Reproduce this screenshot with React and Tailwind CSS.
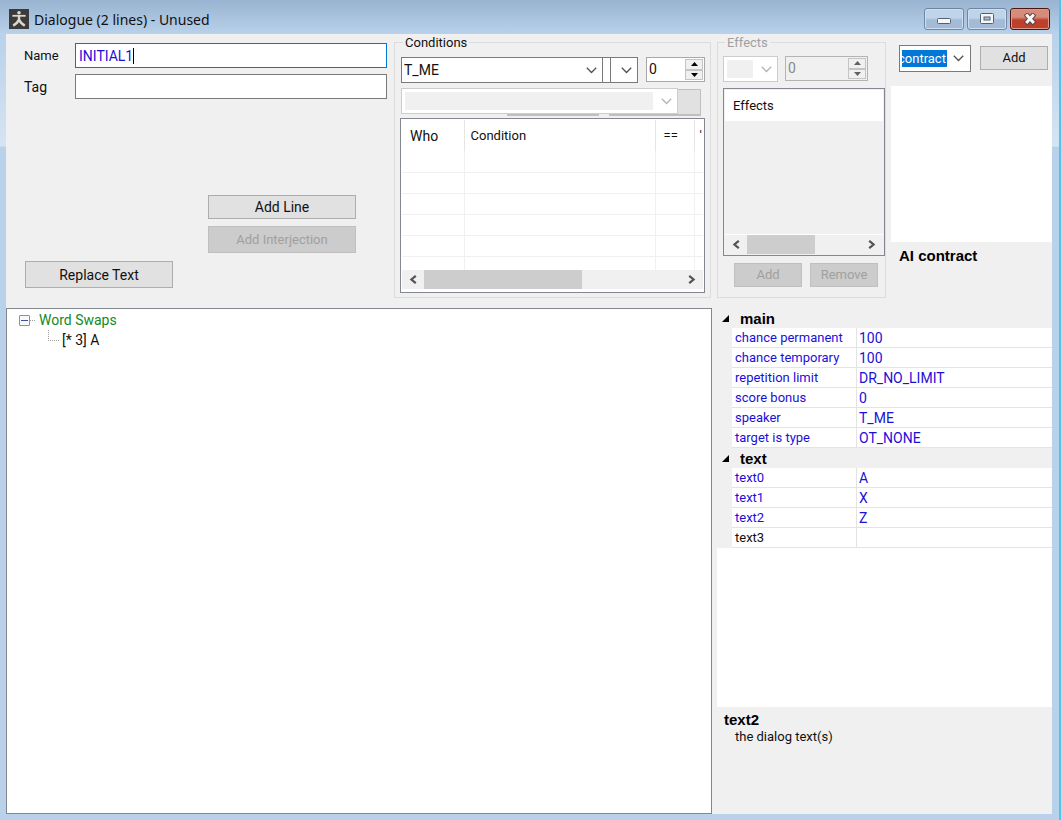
import clsx from 'clsx';

const mainProps = [
  ['chance permanent', '100'],
  ['chance temporary', '100'],
  ['repetition limit', 'DR_NO_LIMIT'],
  ['score bonus', '0'],
  ['speaker', 'T_ME'],
  ['target is type', 'OT_NONE'],
];

const textProps = [
  ['text0', 'A'],
  ['text1', 'X'],
  ['text2', 'Z'],
  ['text3', ''],
];

const Chevron = ({ className }) => (
  <svg viewBox="0 0 11 7" className={clsx('h-[7px] w-[11px]', className)} fill="none" stroke="currentColor" strokeWidth="1.3">
    <path d="M0.8 0.8 5.5 5.5 10.2 0.8" />
  </svg>
);

const Button = ({ className, children, ...props }) => (
  <button
    type="button"
    className={clsx(
      'border border-[#adadad] bg-[#e1e1e1] text-center leading-4 text-[#111] disabled:border-[#bfbfbf] disabled:bg-[#cccccc] disabled:text-[#a0a0a0]',
      className,
    )}
    {...props}
  >
    {children}
  </button>
);

// Select box with a flat arrow; a disabled one shows a gray well inside
const Combo = ({ label, options = [''], disabled, className }) => (
  <div className={clsx('relative h-[26px] border bg-white', disabled ? 'border-[#cccccc] p-[3px] pr-6' : 'border-[#7a7a7a]', className)}>
    <select
      aria-label={label}
      disabled={disabled}
      className={clsx('block h-full w-full appearance-none pl-[2px] outline-none', disabled ? 'bg-[#f0f0f0]' : 'bg-transparent')}
    >
      {options.map((option) => (
        <option key={option}>{option}</option>
      ))}
    </select>
    <Chevron className={clsx('pointer-events-none absolute top-[9px] right-[5px]', disabled ? 'text-[#b4b4b4]' : 'text-[#505050]')} />
  </div>
);

const Spinner = ({ label, disabled, className }) => (
  <div className={clsx('flex h-[25px] border p-px', disabled ? 'border-[#b4b4b4] bg-[#f0f0f0] text-[#8a8a8a]' : 'border-[#a8a8a8] bg-white', className)}>
    <input aria-label={label} defaultValue="0" disabled={disabled} className="h-5 min-w-0 flex-1 pl-px outline-none" />
    <div className="flex w-[18px] flex-col">
      <button type="button" aria-label={`${label} up`} disabled={disabled} className="flex flex-1 items-center justify-center border border-[#c4c4c4] bg-[#f0f0f0]">
        <svg viewBox="0 0 7 4" className={clsx('h-1 w-[7px]', disabled ? 'text-[#606060]' : 'text-black')} fill="currentColor">
          <path d="M3.5 0 7 4H0Z" />
        </svg>
      </button>
      <button type="button" aria-label={`${label} down`} disabled={disabled} className="flex flex-1 items-center justify-center border border-[#c4c4c4] bg-[#f0f0f0]">
        <svg viewBox="0 0 7 4" className={clsx('h-1 w-[7px]', disabled ? 'text-[#606060]' : 'text-black')} fill="currentColor">
          <path d="M3.5 4 7 0H0Z" />
        </svg>
      </button>
    </div>
  </div>
);

const ScrollBar = ({ thumbClass }) => (
  <div className="flex h-[19px] items-center bg-[#f0f0f0] text-[#555]">
    <button type="button" aria-label="Scroll left" className="flex w-[22px] justify-center">
      <svg viewBox="0 0 8 9" className="h-[9px] w-2" fill="none" stroke="currentColor" strokeWidth="2.2">
        <path d="M6.8 0.8 2.4 4.5 6.8 8.2" />
      </svg>
    </button>
    <div className="flex h-full flex-1">
      <div className={clsx('h-full bg-[#cdcdcd]', thumbClass)} />
    </div>
    <button type="button" aria-label="Scroll right" className="flex w-[22px] justify-center">
      <svg viewBox="0 0 8 9" className="h-[9px] w-2" fill="none" stroke="currentColor" strokeWidth="2.2">
        <path d="M1.2 0.8 5.6 4.5 1.2 8.2" />
      </svg>
    </button>
  </div>
);

const TitleBar = () => (
  <header className="flex h-[34px] shrink-0 items-center bg-linear-to-b from-[#99b4d1] to-[#b9d1ea] pt-1 pr-[9px] pl-[9px]">
    <svg viewBox="0 0 20 20" className="size-5" fill="none" stroke="#dcd8d0">
      <rect width="20" height="20" fill="#3b3b3b" stroke="none" />
      <circle cx="10" cy="3.8" r="1.8" fill="#dcd8d0" stroke="none" />
      <path d="M3.4 6.8H16.6" strokeWidth="1.8" />
      <path d="M10 6V10.5C9 13 7 15 4.200 16.600M10 10.5C11 13 13 15 15.800 16.600" strokeWidth="2.4" />
    </svg>
    <h1 className="ml-[5px] flex-1 pt-px font-['Noto_Sans','Open_Sans',sans-serif] text-[14px] leading-5 text-[#111]">Dialogue (2 lines) - Unused</h1>
    <div className="flex gap-[3px]">
      <button type="button" aria-label="Minimize" className="flex h-[22px] w-10 items-center justify-center rounded-[3px] border border-[#6f87a2] bg-linear-to-b from-[#bfd3e9] from-45% to-[#a3bbd6] to-55% shadow-[inset_0_0_0_1px_#d0dff0]">
        <svg viewBox="0 0 14 12" className="h-3 w-3.5">
          <rect x="0.5" y="5.5" width="13" height="5" rx="1" fill="#f6f6f6" stroke="#53606f" />
        </svg>
      </button>
      <button type="button" aria-label="Maximize" className="flex h-[22px] w-10 items-center justify-center rounded-[3px] border border-[#6f87a2] bg-linear-to-b from-[#bfd3e9] from-45% to-[#a3bbd6] to-55% shadow-[inset_0_0_0_1px_#d0dff0]">
        <svg viewBox="0 0 14 12" className="h-3 w-3.5">
          <rect x="0.5" y="0.5" width="13" height="10" rx="1" fill="#f6f6f6" stroke="#53606f" />
          <rect x="4" y="4" width="6" height="3" fill="#a9c0da" stroke="#53606f" />
        </svg>
      </button>
      <button type="button" aria-label="Close" className="flex h-[22px] w-10 items-center justify-center rounded-[3px] border border-[#4d1412] bg-linear-to-b from-[#d58c7b] from-40% to-[#bd412a] to-55% shadow-[inset_0_0_0_1px_#dd9a89]">
        <svg viewBox="0 0 14 12" className="h-3 w-3.5" fill="none">
          <path d="M2.600 0.8 11.400 10.8M11.400 0.8 2.600 10.8" stroke="#5c4545" strokeWidth="5" />
          <path d="M3.200 1.600 10.800 10M10.800 1.600 3.200 10" stroke="#f8f8f8" strokeWidth="3" />
        </svg>
      </button>
    </div>
  </header>
);

const DialogueForm = () => (
  <section className="flex min-w-0 flex-1 flex-col pt-[9px] pr-[7px] pl-[18px]">
    <div className="flex items-center">
      <label htmlFor="name" className="w-[51px] text-[13px]">Name</label>
      <div className="flex h-[25px] flex-1 items-center border border-[#0078d7] bg-white pl-[3px]">
        <input id="name" defaultValue="INITIAL1" className="field-sizing-content text-[#1a10d8] outline-none" />
        <span className="h-4 w-px bg-black" />
      </div>
    </div>
    <div className="mt-[6px] flex items-center">
      <label htmlFor="tag" className="w-[51px]">Tag</label>
      <input id="tag" className="h-[25px] min-w-0 flex-1 border border-[#7a7a7a] bg-white px-[3px] outline-none" />
    </div>
    <div className="mt-auto flex flex-col gap-[7px] pr-[31px] pb-5">
      <Button className="h-6 w-[148px] self-end">Add Line</Button>
      <Button disabled className="h-[27px] w-[148px] self-end text-[13px]">Add Interjection</Button>
      <Button className="mt-px ml-px h-[27px] w-[148px]">Replace Text</Button>
    </div>
  </section>
);

const Conditions = () => (
  <fieldset className="h-[264px] w-[316px] border border-[#dcdcdc] px-[5px]">
    <legend className="ml-[3px] px-[2px] pt-px text-[13px] leading-4">Conditions</legend>
    <div className="mt-[6px] ml-px flex">
      <Combo label="Who" options={['T_ME']} className="w-[202px]" />
      <div className="-ml-px h-[26px] w-[9px] border border-[#7a7a7a] bg-white" />
      <Combo label="Operator" className="-ml-px w-7" />
      <Spinner label="Condition value" className="ml-2 w-[59px]" />
    </div>
    <div className="relative mt-[5px] ml-px flex h-7 gap-[10px] pt-px pl-[106px]">
      <Button disabled aria-label="Add condition" className="w-[92px] border-b-2" />
      <button type="button" aria-label="Remove condition" className="w-[92px] border border-b-2 border-[#bfbfbf] bg-[#e1e1e1]" />
      <div className="absolute top-0 left-0 w-[277px]">
        <Combo label="Condition" disabled />
      </div>
    </div>
    <div className="mt-[2px] border border-[#828790] bg-white px-px pt-px pb-[3px]">
      <table className="w-full table-fixed border-collapse text-[13px]">
        <thead>
          <tr className="h-[31px] text-left">
            <th className="w-[62px] border-r border-[#e5e5e5] pl-2 text-[14px] font-normal">Who</th>
            <th className="border-r border-[#e5e5e5] pl-[6px] font-normal">Condition</th>
            <th className="w-[39px] border-r border-[#e5e5e5] pl-2 font-normal">==</th>
            <th className="w-[9px] pl-[5px] font-normal">'</th>
          </tr>
        </thead>
        <tbody>
          {[0, 1, 2, 3, 4].map((row) => (
            <tr key={row} className="h-[21px] border-b border-[#f0f0f0]">
              <td className="border-r border-[#f0f0f0]" />
              <td className="border-r border-[#f0f0f0]" />
              <td className="border-r border-[#f0f0f0]" />
              <td />
            </tr>
          ))}
          <tr className="h-[14px]">
            <td className="border-r border-[#f0f0f0]" />
            <td className="border-r border-[#f0f0f0]" />
            <td className="border-r border-[#f0f0f0]" />
            <td />
          </tr>
        </tbody>
      </table>
      <ScrollBar thumbClass="w-[158px]" />
    </div>
  </fieldset>
);

const Effects = () => (
  <fieldset className="ml-[6px] h-[264px] w-[169px] border border-[#dcdcdc] pl-[5px]">
    <legend className="ml-[2px] px-[2px] pt-px text-[13px] leading-4 text-[#a0a0a0]">Effects</legend>
    <div className="mt-[5px] flex gap-[7px]">
      <Combo label="Effect type" disabled className="w-[55px]" />
      <Spinner label="Effect value" disabled className="w-[83px]" />
    </div>
    <div className="mt-[6px] flex h-[168px] w-[162px] flex-col border border-[#828790] bg-[#f0f0f0] p-px">
      <div className="h-[31px] bg-white pl-2 text-[13px] leading-[31px]">Effects</div>
      <div className="flex-1 border-b border-white" />
      <ScrollBar thumbClass="w-[68px]" />
    </div>
    <div className="mt-[7px] flex gap-2 pl-[11px] text-[13px]">
      <Button disabled className="h-6 w-[68px]">Add</Button>
      <Button disabled className="h-6 w-[68px]">Remove</Button>
    </div>
  </fieldset>
);

const ContractPanel = () => (
  <section className="ml-[5px] flex w-[161px] flex-col pt-[11px]">
    <div className="flex gap-[9px] pl-2">
      <div className="flex h-[27px] w-[72px] items-center border border-[#7a7a7a] bg-white pl-[2px]">
        <input aria-label="Contract" defaultValue="contract" className="h-[17px] w-[45px] -indent-[4px] bg-[#0078d7] text-[13px] text-white outline-none" />
        <button type="button" aria-label="Open list" className="flex flex-1 justify-center text-[#505050]">
          <Chevron />
        </button>
      </div>
      <Button className="mt-px h-6 w-[68px] text-[13px]">Add</Button>
    </div>
    <div className="mt-[14px] h-[156px] bg-white" />
    <h2 className="mt-[6px] pl-2 font-['Liberation_Sans',Arial,sans-serif] text-[15px] leading-4 font-bold text-black">AI contract</h2>
  </section>
);

const TreePanel = () => (
  <section className="min-w-0 flex-1 border border-[#828790] bg-white pt-px pl-3">
    <div className="flex h-5 items-center">
      <button type="button" aria-label="Collapse Word Swaps" className="flex size-[11px] items-center justify-center rounded-[1px] border border-[#919191] bg-[#f8f8f8]">
        <span className="h-px w-[7px] bg-[#3c4fa0]" />
      </button>
      <span className="w-[5px] border-t border-dotted border-[#a0a0a0]" />
      <span className="ml-[4px] text-[#138a22]">Word Swaps</span>
    </div>
    <div className="flex h-5 pl-[29px]">
      <span className="h-[11px] w-[11px] border-b border-l border-dotted border-[#a0a0a0]" />
      <span className="ml-[3px] leading-5">[* 3] A</span>
    </div>
  </section>
);

const PropertyGroup = ({ title, rows }) => (
  <tbody>
    <tr className="h-5 bg-[#f0f0f0]">
      <th colSpan={3} className="text-left font-['Liberation_Sans',Arial,sans-serif] text-[15px] font-bold text-black">
        <div className="flex items-center gap-[11px] pl-[5px] leading-[19px]">
          <svg viewBox="0 0 7 7" className="size-[7px]">
            <path d="M7 0V7H0Z" />
          </svg>
          {title}
        </div>
      </th>
    </tr>
    {rows.map(([name, value]) => (
      <tr key={name} className={clsx('h-5', value ? 'text-[#1a10d8]' : 'text-[#111]')}>
        <td className="bg-[#f0f0f0]" />
        <td className="border-r border-b border-[#e3e3e3] pt-px pl-[3px] text-[13px] leading-[18px]">{name}</td>
        <td className="border-b border-[#e3e3e3] pt-px pl-[2px] leading-[18px]">{value}</td>
      </tr>
    ))}
  </tbody>
);

const PropertyPanel = () => (
  <section className="ml-[5px] flex w-[335px] flex-col">
    <div className="flex-1 bg-white">
      <table className="w-full table-fixed border-separate border-spacing-0">
        <colgroup>
          <col className="w-[15px]" />
          <col className="w-[125px]" />
          <col />
        </colgroup>
        <PropertyGroup title="main" rows={mainProps} />
        <PropertyGroup title="text" rows={textProps} />
      </table>
    </div>
    <div className="h-[107px] pt-[5px] pl-[7px]">
      <h2 className="font-['Liberation_Sans',Arial,sans-serif] text-[15px] leading-4 font-bold text-black">text2</h2>
      <p className="pt-px pl-[11px] text-[13px] leading-4">the dialog text(s)</p>
    </div>
  </section>
);

const App = () => {
  return (
    <div className="flex min-h-screen flex-col border-r-2 border-[#45c8f2] bg-[linear-gradient(to_bottom,#b9d1ea_34px,#d6e4f3_146px,#b9d1ea_147px)] font-['Roboto','Liberation_Sans',sans-serif] text-[14px] leading-5 text-[#111]">
      <TitleBar />
      <main className="mr-[7px] mb-[6px] ml-[6px] flex flex-1 flex-col bg-[#f0f0f0]">
        <div className="flex h-[274px]">
          <DialogueForm />
          <Conditions />
          <Effects />
          <ContractPanel />
        </div>
        <div className="flex flex-1">
          <TreePanel />
          <PropertyPanel />
        </div>
      </main>
    </div>
  );
};

export default App;
